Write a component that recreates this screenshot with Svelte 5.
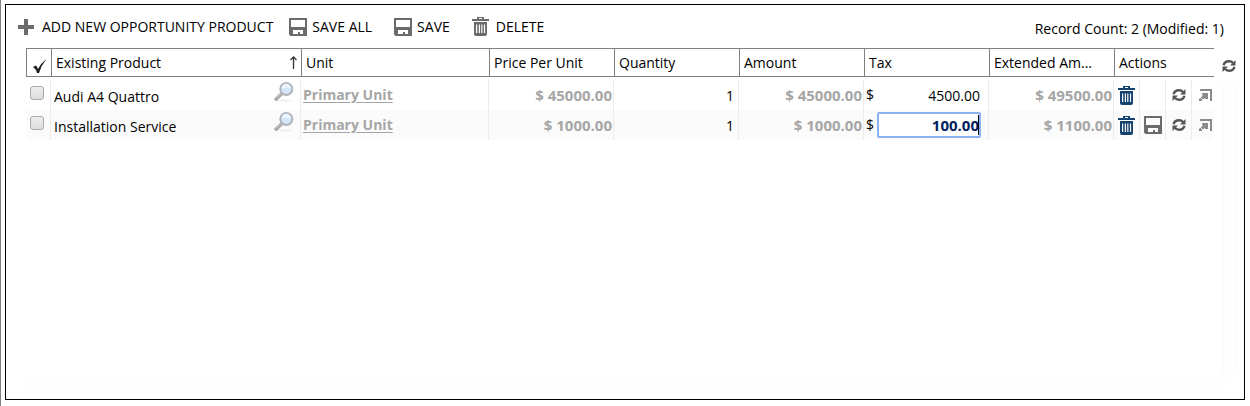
<script>
  const rows = $state([
    { id: 1, product: 'Audi A4 Quattro', unit: 'Primary Unit', price: '$ 45000.00', quantity: '1', amount: '$ 45000.00', tax: '4500.00', total: '$ 49500.00', modified: false },
    { id: 2, product: 'Installation Service', unit: 'Primary Unit', price: '$ 1000.00', quantity: '1', amount: '$ 1000.00', tax: '100.00', total: '$ 1100.00', modified: true }
  ]);
</script>

{#snippet disk()}
  <svg class="disk" viewBox="0 0 18 18" aria-hidden="true">
    <path fill="currentColor" fill-rule="evenodd" d="M0 0H18V18H1.500L0 16.500ZM2 2V9H16V2ZM4 12V16H9V14H11V16H14V12Z" />
  </svg>
{/snippet}

{#snippet bin()}
  <svg class="bin" viewBox="0 0 17 19" aria-hidden="true">
    <path fill="currentColor" fill-rule="evenodd" d="M5 0H12V2H17V4H0V2H5ZM7 1V2H10V1ZM2 5H15V17Q15 19 13 19H4Q2 19 2 17ZM4 7.500V16H5.200V7.500ZM6.800 7.500V16H8V7.500ZM9.200 7.500V16H10.400V7.500ZM11.900 7.500V16H13.100V7.500Z" />
  </svg>
{/snippet}

{#snippet cycle()}
  <svg class="cycle" viewBox="0 0 14 14" aria-hidden="true">
    <path fill="none" stroke="currentColor" stroke-width="2.400" d="M1.600 6.300C2.200 3.600 4.300 2.200 7 2.200C8.800 2.200 10 2.700 11 3.900M12.400 7.700C11.800 10.400 9.700 11.800 7 11.800C5.200 11.800 4 11.300 3 10.100" />
    <path fill="currentColor" d="M13.500 1V6.500H8ZM.5 13V7.500H6Z" />
  </svg>
{/snippet}

{#snippet lens()}
  <svg class="lens" viewBox="0 0 20 20" aria-hidden="true">
    <ellipse cx="10" cy="18.500" rx="8" ry="1" fill="#eee" />
    <path d="M8 11.500L2 17.200" stroke="#aaa4a2" stroke-width="3.400" stroke-linecap="round" />
    <path d="M8 11L2.500 16" stroke="#d5d1d0" stroke-width="1" stroke-linecap="round" />
    <circle cx="12.300" cy="7" r="6" fill="#d3e5f8" stroke="#b0b4bd" stroke-width="2" />
    <path d="M7.600 6.500a4.700 4.700 0 0 1 9.400 0q-4.700-1.500-9.400 0Z" fill="#edf6ff" />
  </svg>
{/snippet}

<main class="page">
  <section class="frame">
    <header class="toolbar">
      <button class="command add">
        <svg class="plus" viewBox="0 0 16 16" aria-hidden="true"><path fill="currentColor" d="M6 0H10V6H16V10H10V16H6V10H0V6H6Z" /></svg>
        ADD NEW OPPORTUNITY PRODUCT
      </button>
      <button class="command save-all">{@render disk()}SAVE ALL</button>
      <button class="command save">{@render disk()}SAVE</button>
      <button class="command delete">{@render bin()}DELETE</button>
      <output class="count">Record Count: 2 (Modified: 1)</output>
    </header>

    <div class="content">
      <table>
        <colgroup>
          <col class="c-check" /><col /><col class="c-unit" />
          <col class="c-num" /><col class="c-num" /><col class="c-num" /><col class="c-num" /><col class="c-num" />
          <col class="c-actions" />
        </colgroup>
        <thead>
          <tr>
            <th class="check">
              <button aria-label="Select all">
                <svg viewBox="0 0 16 16" aria-hidden="true"><path fill="#222" d="M1 9L4 7.500Q5.500 9 6 11Q9 5 14.500 1Q9.500 7 7 15H5Q4 11 1 9Z" /></svg>
              </button>
            </th>
            <th>
              <span class="sorted">Existing Product
                <svg viewBox="0 0 7 13" aria-hidden="true"><path fill="none" stroke="#333" stroke-width="1.300" d="M3.500 13V1M.5 4L3.500 1L6.500 4" /></svg>
              </span>
            </th>
            <th>Unit</th>
            <th>Price Per Unit</th>
            <th>Quantity</th>
            <th>Amount</th>
            <th>Tax</th>
            <th>Extended Am...</th>
            <th>Actions</th>
          </tr>
        </thead>
        <tbody>
          {#each rows as row (row.id)}
            <tr>
              <td class="pick"><input type="checkbox" aria-label="Select {row.product}" /></td>
              <td>
                <div class="lookup">
                  <input class="box" type="text" aria-label="Existing Product" bind:value={row.product} />
                  <button aria-label="Look up product">{@render lens()}</button>
                </div>
              </td>
              <td class="unit"><a href="#unit">{row.unit}</a></td>
              <td class="fixed">{row.price}</td>
              <td><div class="quantity"><input class="box number" type="text" aria-label="Quantity" bind:value={row.quantity} /></div></td>
              <td class="fixed">{row.amount}</td>
              <td>
                <div class="tax">
                  <span>$</span>
                  <div class="field" class:active={row.modified}>
                    <input class="box number" type="text" aria-label="Tax" bind:value={row.tax} />
                    {#if row.modified}<i class="caret"></i>{/if}
                  </div>
                </div>
              </td>
              <td class="fixed">{row.total}</td>
              <td class="last">
                <div class="actions">
                  <button class="remove" aria-label="Delete record">{@render bin()}</button>
                  <span>{#if row.modified}<button aria-label="Save record">{@render disk()}</button>{/if}</span>
                  <button aria-label="Refresh record">{@render cycle()}</button>
                  <button aria-label="Open record">
                    <svg class="open" viewBox="0 0 13 13" aria-hidden="true"><path fill="#8a8a8a" d="M1 0H13V12H11V2H1ZM3 4H9V10H6.500L5.500 9L2.500 12H0V10L3.500 7Z" /><path stroke="#fff" d="M1.500 8.500L4.500 11.500" /></svg>
                  </button>
                </div>
              </td>
            </tr>
          {/each}
        </tbody>
      </table>
      <aside>
        <button class="refresh" aria-label="Refresh list">{@render cycle()}</button>
        <div class="track vertical"></div>
      </aside>
    </div>
    <div class="track horizontal"></div>
  </section>
</main>

<style>
  :global(body) { margin: 0; background: #fff; }
  * { box-sizing: border-box; }
  .page {
    display: flex;
    min-height: 100vh;
    padding: 4px 5px 6px 4px;
    border-left: 1px solid #808080;
    color: #000;
    font: 14px/20px "Open Sans", "Noto Sans", sans-serif;
  }
  .frame {
    flex: 1;
    min-width: 0;
    display: flex;
    flex-direction: column;
    padding-bottom: 7px;
    border: 1px solid #000;
  }
  button {
    display: flex;
    align-items: center;
    justify-content: center;
    padding: 0;
    border: 0;
    background: none;
    color: inherit;
    font: inherit;
    cursor: pointer;
  }
  svg { display: block; flex: none; }
  .disk { width: 18px; height: 18px; color: #6b6b6b; }
  .bin { width: 17px; height: 19px; color: #6b6b6b; }
  .cycle { width: 14px; height: 14px; color: #555; }
  .plus { width: 16px; height: 16px; color: #6b6b6b; }

  .toolbar { display: flex; align-items: center; height: 43px; padding: 0 20px 0 12px; }
  .command { gap: 5px; white-space: nowrap; }
  .add { gap: 8px; }
  .save-all { margin-left: 16px; }
  .save { margin-left: 22px; }
  .delete { gap: 7px; margin-left: 22px; }
  .count { margin-left: auto; padding-top: 4px; white-space: nowrap; }

  .content { flex: 1; display: flex; align-items: stretch; padding-left: 20px; }
  table { flex: 1; min-width: 0; align-self: flex-start; table-layout: fixed; border-spacing: 0; }
  .c-check { width: 25px; }
  .c-unit { width: 188px; }
  .c-num { width: 125px; }
  .c-actions { width: 100px; }
  th {
    height: 29px;
    padding: 0 4px;
    border: solid #808080;
    border-width: 1px 0 1px 1px;
    font-weight: 400;
    text-align: left;
    white-space: nowrap;
  }
  th.check { padding: 0; }
  th.check button { width: 24px; height: 27px; padding: 7px 0 0 2px; }
  th.check svg { width: 16px; height: 16px; }
  .sorted { display: flex; align-items: center; justify-content: space-between; }
  .sorted svg { width: 7px; height: 13px; }

  td { height: 30px; padding: 0; border-right: 1px solid #ececec; }
  thead::after { content: ""; display: block; height: 3px; }
  tbody tr:nth-child(even) { background: #fbfbfb; }
  td.last { border-right: 0; }
  .pick input {
    appearance: none;
    display: block;
    width: 14px;
    height: 14px;
    margin: 0 0 4px 4px;
    border: 1px solid #aaa;
    border-radius: 3px;
    background: linear-gradient(#eee, #dcdcdc);
  }
  .lookup { display: flex; padding: 0 6px 0 3px; }
  .lookup button { height: 24px; align-items: flex-start; }
  .lookup input { flex: 1; padding-top: 3px; }
  .lens { width: 20px; height: 20px; }
  .box {
    width: 100%;
    min-width: 0;
    height: 26px;
    padding: 0;
    border: 0;
    background: none;
    color: #000;
    font: inherit;
    outline: 0;
  }
  .number { text-align: right; }
  .unit { padding-left: 2px; font-weight: 700; }
  .unit a { color: #a6a6a6; text-underline-offset: 2px; }
  .fixed { padding-right: 1px; color: #a6a6a6; font-size: 15px; font-weight: 700; text-align: right; }
  .quantity { padding: 0 4px 0 3px; }
  .tax { display: flex; align-items: center; gap: 3px; padding: 0 7px 0 2px; }
  .field { position: relative; flex: 1; display: flex; border: 1px solid transparent; }
  .field .box { height: 24px; }
  .active { border: 2px solid #8ab2f2; border-radius: 2px; background: #fff; }
  .active .box { height: 22px; color: #001f60; font-size: 15px; font-weight: 700; }
  .caret { position: absolute; top: 1px; right: 0; width: 1px; height: 20px; background: #000; }
  .actions { display: grid; grid-template-columns: repeat(3, 26px) 1fr; height: 30px; }
  .actions > * { display: flex; align-items: center; justify-content: center; border-right: 1px solid #ececec; }
  .actions > :last-child { justify-content: flex-end; padding-right: 2px; border-right: 0; }
  .remove .bin { color: #15426f; }
  .open { width: 13px; height: 13px; }

  aside { width: 30px; display: flex; flex-direction: column; align-items: center; }
  .refresh { height: 33px; padding-top: 3px; }
  .track { border-radius: 8px; background: #fefefe; box-shadow: inset 0 0 3px #f7f7f7; }
  .vertical { flex: 1; width: 16px; margin-left: 2px; }
  .horizontal { height: 15px; margin: 0 22px 0 19px; }
</style>
